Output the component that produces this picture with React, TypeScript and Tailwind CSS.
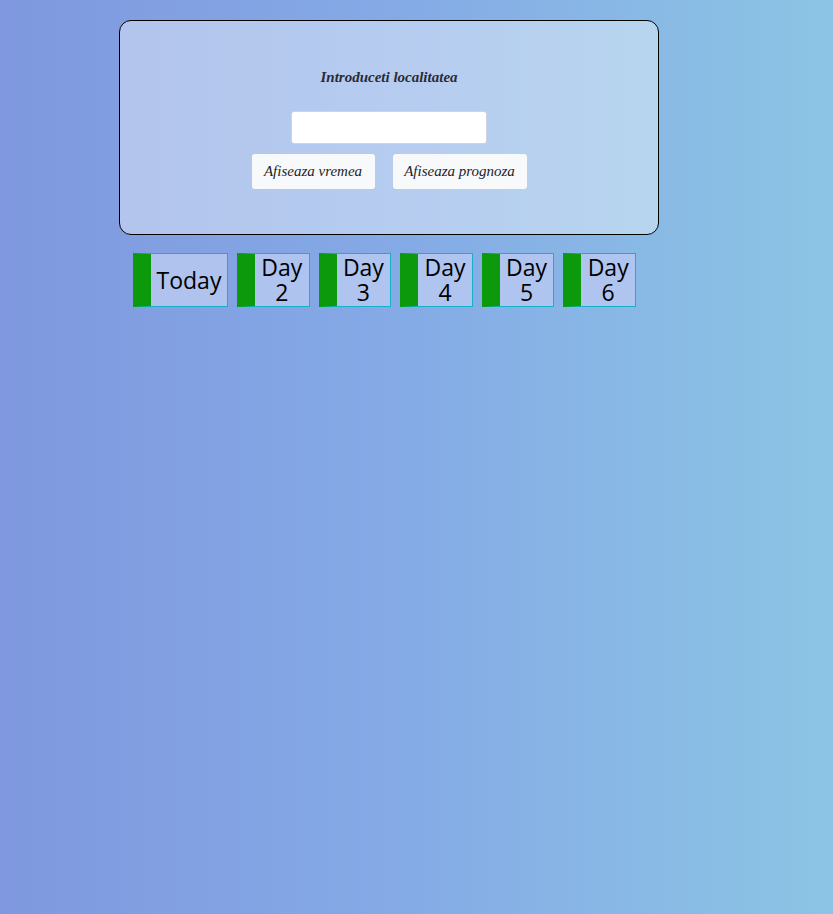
export default function App() {
  const days = ["Today", "Day 2", "Day 3", "Day 4", "Day 5", "Day 6"];
  return (
    <div className="min-h-[914px] w-full bg-gradient-to-r from-[#7f98df] via-[#85abe6] to-[#8cc5e4] pt-[20px] pl-[119px]">
      <div className="flex h-[215px] w-[540px] flex-col items-center rounded-[12px] border border-black bg-white/40 pt-[45px]">
        <div className="font-['Liberation_Serif',serif] text-[15px] font-bold italic leading-[22px] text-[#2b2b33]">
          Introduceti localitatea
        </div>
        <input
          type="text"
          className="mt-[23px] h-[33px] w-[196px] rounded-[3px] border border-[#ced4da] bg-white outline-none"
        />
        <div className="mt-[10px] flex gap-[18px]">
          <button className="h-[35px] w-[123px] rounded-[3px] bg-[#f8f9fa] font-['Liberation_Serif',serif] text-[15px] italic text-[#212529]">
            Afiseaza vremea
          </button>
          <button className="h-[35px] w-[134px] rounded-[3px] bg-[#f8f9fa] font-['Liberation_Serif',serif] text-[15px] italic text-[#212529]">
            Afiseaza prognoza
          </button>
        </div>
      </div>
      <div className="ml-[14px] mt-[18px] flex gap-[9px]">
        {days.map((d, i) => (
          <div
            key={d}
            className={`flex h-[54px] items-center border border-l-[18px] border-[#17b0c8] border-l-[#0c9a0c] bg-[#b4c6f0]/90 ${
              i === 0 ? "w-[95px]" : "w-[72.6px]"
            }`}
          >
            <div
              className={`w-full text-center font-['Open_Sans',sans-serif] text-[23px] leading-[25px] text-black ${
                i === 0 ? "" : "px-[6px]"
              }`}
            >
              {d}
            </div>
          </div>
        ))}
      </div>
    </div>
  );
}
